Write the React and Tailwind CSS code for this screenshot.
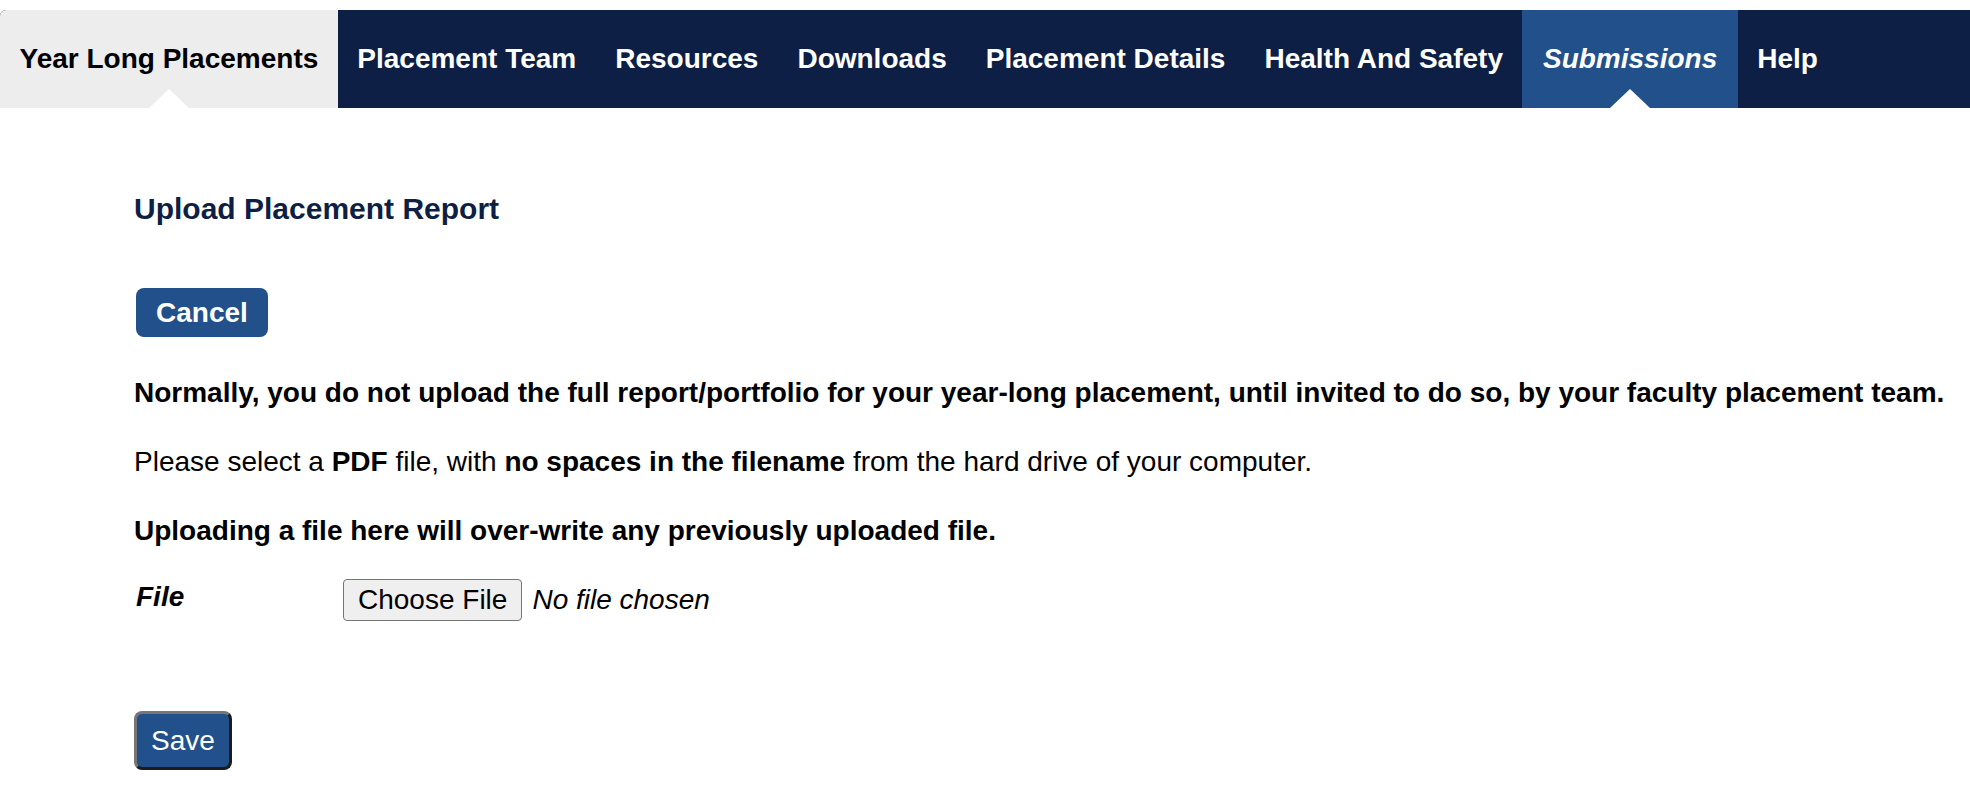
import { useState } from 'react';

const tabs = [
  { label: 'Year Long Placements', kind: 'home' },
  { label: 'Placement Team' },
  { label: 'Resources' },
  { label: 'Downloads' },
  { label: 'Placement Details' },
  { label: 'Health And Safety' },
  { label: 'Submissions', kind: 'active' },
  { label: 'Help' },
];

function NavTab({ tab }) {
  let cls = 'relative flex items-center px-[19.5px] text-[28px] font-bold text-white';
  if (tab.kind === 'home') cls = 'relative flex items-center px-[19.5px] text-[28px] font-bold text-black bg-[#ededed] rounded-tl-md';
  if (tab.kind === 'active') cls = 'relative flex items-center px-[20.5px] text-[28px] font-bold italic text-white bg-[#22508a]';
  return (
    <a href="#" className={cls}>
      {tab.label}
      {tab.kind && (
        <span className="absolute bottom-0 left-1/2 -translate-x-1/2 w-0 h-0 border-l-[20px] border-r-[20px] border-b-[19px] border-l-transparent border-r-transparent border-b-white" />
      )}
    </a>
  );
}

export default function App() {
  const [fileName] = useState('');

  return (
    <div className="min-h-screen bg-white text-black" style={{ fontFamily: '"Liberation Sans", Arial, sans-serif' }}>
      <div className="pt-[10px]">
        <nav className="flex h-[98px] bg-[#0d1f44] rounded-tl-md">
          {tabs.map((t) => (
            <NavTab key={t.label} tab={t} />
          ))}
        </nav>
      </div>

      <div className="pl-[134px] flex flex-col items-start">
        <h2 className="mt-[83px] text-[30px] leading-[36px] font-bold text-[#0d1f44]">Upload Placement Report</h2>

        <button className="mt-[61px] h-[49px] px-[20px] rounded-[8px] bg-[#22508a] text-white text-[28px] font-bold leading-none ml-[2px]">
          Cancel
        </button>

        <p className="mt-[40px] text-[28px] leading-[32px] font-bold">
          Normally, you do not upload the full report/portfolio for your year-long placement, until invited to do so, by your faculty placement team.
        </p>
        <p className="mt-[37px] text-[28px] leading-[32px]">
          Please select a <b>PDF</b> file, with <b>no spaces in the filename</b> from the hard drive of your computer.
        </p>
        <p className="mt-[37px] text-[28px] leading-[32px] font-bold">
          Uploading a file here will over-write any previously uploaded file.
        </p>

        <div className="mt-[32px] flex items-center ml-[2px]">
          <label className="w-[207px] text-[28px] font-bold italic leading-[32px] -mt-[6px]">File</label>
          <span className="h-[42px] px-[14px] flex items-center bg-[#efefef] border border-[#767676] rounded-[4px] text-[28px] leading-none">
            Choose File
          </span>
          <span className="ml-[10px] text-[28px] italic leading-none">{fileName || 'No file chosen'}</span>
        </div>

        <button className="mt-[90px] h-[59px] px-[14px] rounded-[8px] bg-[#22508a] text-white text-[28px] leading-none border-[3px] border-t-[#767676] border-l-[#767676] border-r-[#1c1c1c] border-b-[#1c1c1c]">
          Save
        </button>
      </div>
    </div>
  );
}
